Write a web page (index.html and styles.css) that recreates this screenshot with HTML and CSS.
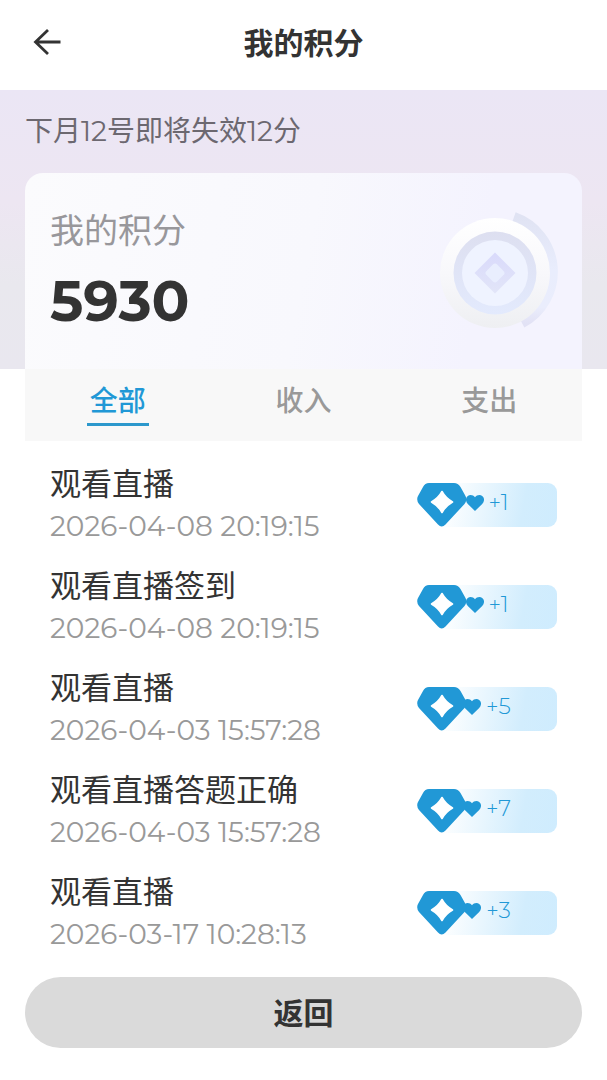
FILE: index.html
```html
<!DOCTYPE html>
<html lang="zh-CN">
<head>
<meta charset="utf-8">
<meta name="viewport" content="width=device-width, initial-scale=1">
<title>我的积分</title>
<link rel="stylesheet" href="styles.css">
</head>
<body>
<svg class="sprite" aria-hidden="true">
  <defs>
    <symbol id="gem" viewBox="0 0 50 44">
      <path d="M12 0H37Q41 0 43.500 4L48.500 13Q50.500 17 47.500 21L28.500 41.500Q24.700 45.500 21 41.500L2 21Q-1 17 1 13L6 4Q8 0 12 0Z" fill="#2198d6"/>
      <path d="M25 8.500Q28.500 15 35.500 19Q28.500 23 25 29.500Q21.500 23 14.500 19Q21.500 15 25 8.500Z" fill="#fff" stroke="#fff" stroke-width="1.600" stroke-linejoin="round"/>
    </symbol>
    <symbol id="heart" viewBox="0 0 18 16">
      <path d="M9 16L1.800 9C-.6 6.500-.6 3 1.500 1.200C3.800-.7 7-.3 9 2.200C11-.3 14.200-.7 16.500 1.200C18.600 3 18.600 6.500 16.200 9Z" fill="#2198d6"/>
    </symbol>
  </defs>
</svg>
<header class="topbar">
  <button class="back" type="button" aria-label="返回上一页">
    <svg width="28" height="28" viewBox="0 0 28 28" fill="none" stroke="#333" stroke-width="2.800"><path d="M15 2L2.500 14L15 26M2.500 14H27.500"/></svg>
  </button>
  <h1 class="title">我的积分</h1>
</header>
<main>
  <section class="hero">
    <p class="notice">下月12号即将失效12分</p>
    <div class="card">
      <div>
        <h2 class="card-label">我的积分</h2>
        <p class="total">5930</p>
      </div>
      <svg class="medal" width="120" height="124" viewBox="0 0 120 124" aria-hidden="true">
        <defs>
          <linearGradient id="rim" x1="0" y1="0" x2="0" y2="1"><stop offset="0" stop-color="#fff"/><stop offset=".5" stop-color="#f8f8fb"/><stop offset="1" stop-color="#eeeff2"/></linearGradient>
          <linearGradient id="ring" x1="0" y1="0" x2="0" y2="1"><stop offset="0" stop-color="#dddff0"/><stop offset="1" stop-color="#e3eafd"/></linearGradient>
          <linearGradient id="arc" x1="0" y1="0" x2="0" y2="1"><stop offset="0" stop-color="#e0e3f3"/><stop offset=".5" stop-color="#e9edfd"/><stop offset=".85" stop-color="#eaedfc"/><stop offset="1" stop-color="#e2e2f5"/></linearGradient>
          <linearGradient id="diamond" x1="0" y1="0" x2="0" y2="1"><stop offset="0" stop-color="#d9dafb"/><stop offset="1" stop-color="#e2e5f8"/></linearGradient>
        </defs>
        <path d="M74 8A58 58 0 0 1 82 114" fill="none" stroke="url(#arc)" stroke-width="10"/>
        <circle cx="55" cy="64" r="55" fill="url(#rim)"/>
        <circle cx="55" cy="64" r="41.500" fill="url(#ring)"/>
        <circle cx="55" cy="64" r="33" fill="#eff3ff"/>
        <path d="M55 43.500L75.500 64L55 84.500L34.500 64Z" fill="url(#diamond)"/>
        <rect x="47.500" y="56.500" width="15" height="15" rx="3" transform="rotate(45 55 64)" fill="#e9eefe"/>
      </svg>
    </div>
  </section>
  <nav class="tabs">
    <button class="tab active" type="button">全部</button>
    <button class="tab" type="button">收入</button>
    <button class="tab" type="button">支出</button>
  </nav>
  <ul class="list">
    <li class="row"><div><h3 class="name">观看直播</h3><time class="date">2026-04-08 20:19:15</time></div><div class="badge"><svg class="gem"><use href="#gem"/></svg><svg class="heart"><use href="#heart"/></svg><span>+1</span></div></li>
    <li class="row"><div><h3 class="name">观看直播签到</h3><time class="date">2026-04-08 20:19:15</time></div><div class="badge"><svg class="gem"><use href="#gem"/></svg><svg class="heart"><use href="#heart"/></svg><span>+1</span></div></li>
    <li class="row"><div><h3 class="name">观看直播</h3><time class="date">2026-04-03 15:57:28</time></div><div class="badge"><svg class="gem"><use href="#gem"/></svg><svg class="heart"><use href="#heart"/></svg><span>+5</span></div></li>
    <li class="row"><div><h3 class="name">观看直播答题正确</h3><time class="date">2026-04-03 15:57:28</time></div><div class="badge"><svg class="gem"><use href="#gem"/></svg><svg class="heart"><use href="#heart"/></svg><span>+7</span></div></li>
    <li class="row"><div><h3 class="name">观看直播</h3><time class="date">2026-03-17 10:28:13</time></div><div class="badge"><svg class="gem"><use href="#gem"/></svg><svg class="heart"><use href="#heart"/></svg><span>+3</span></div></li>
  </ul>
  <div class="footer"><button class="return" type="button">返回</button></div>
</main>
</body>
</html>
```
FILE: styles.css
```css
* { box-sizing: border-box; }
body, h1, h2, h3, p, ul { margin: 0; padding: 0; }
body {
  background: #fff;
  color: #333;
  font-family: Montserrat, Inter, "Noto Sans CJK SC", sans-serif;
}
button { border: 0; padding: 0; background: none; color: inherit; font: inherit; cursor: pointer; }
svg { display: block; flex: none; }
.sprite { position: absolute; width: 0; height: 0; }

.topbar {
  display: grid;
  grid-template-columns: 28px 1fr 28px;
  align-items: center;
  padding: 20px 33px 26px;
}
.title { padding-top: 4px; font-size: 30px; line-height: 40px; font-weight: 700; text-align: center; }

.hero {
  padding: 20px 25px 0;
  background: linear-gradient(#ebe6f5, #ede6f2 40%, #e9e8ee 70%, #e9e7ef);
}
.notice { color: #6c6870; font-size: 28px; line-height: 42px; font-weight: 400; }
.card {
  display: flex;
  justify-content: space-between;
  align-items: flex-start;
  margin-top: 21px;
  padding: 36px 22px 36px 25px;
  border-radius: 18px 18px 0 0;
  background: linear-gradient(100deg, #fbfbfd, #f8f8fd 50%, #f4f3fe 80%);
}
.card-label { color: #98979b; font-size: 34px; line-height: 44px; font-weight: 400; }
.total { margin-top: 16px; font-size: 56px; line-height: 64px; font-weight: 700; }

.tabs {
  display: grid;
  grid-template-columns: repeat(3, 1fr);
  justify-items: center;
  margin: 0 25px;
  padding-bottom: 15px;
  background: #f8f8f8;
}
.tab { padding: 12px 3px 2px; border-bottom: 3px solid transparent; color: #999; font-size: 28px; line-height: 40px; font-weight: 500; }
.active { color: #2198d6; border-color: #2c98cc; }

.list { display: grid; gap: 18px; padding: 22px 50px; list-style: none; }
.row { display: flex; justify-content: space-between; align-items: center; }
.name { font-size: 31px; line-height: 42px; font-weight: 400; }
.date { display: block; color: #999; font-size: 28px; line-height: 42px; font-weight: 400; }

.badge {
  position: relative;
  display: flex;
  justify-content: center;
  align-items: center;
  gap: 5px;
  width: 140px;
  height: 44px;
  padding-bottom: 4px;
  border-radius: 9px;
  background: linear-gradient(100deg, #fff 20%, #d2edfd 75%, #cfecfe);
  color: #2198d6;
  font-size: 22px;
  line-height: 32px;
  font-weight: 300;
}
.gem { position: absolute; left: 0; top: 0; width: 50px; height: 44px; }
.heart { width: 18px; height: 16px; }

.footer { padding: 0 25px 32px; }
.return {
  display: block;
  width: 100%;
  padding: 15px 0 13px;
  border-radius: 36px;
  background: #dadada;
  font-size: 30px;
  line-height: 43px;
  font-weight: 700;
}
```
